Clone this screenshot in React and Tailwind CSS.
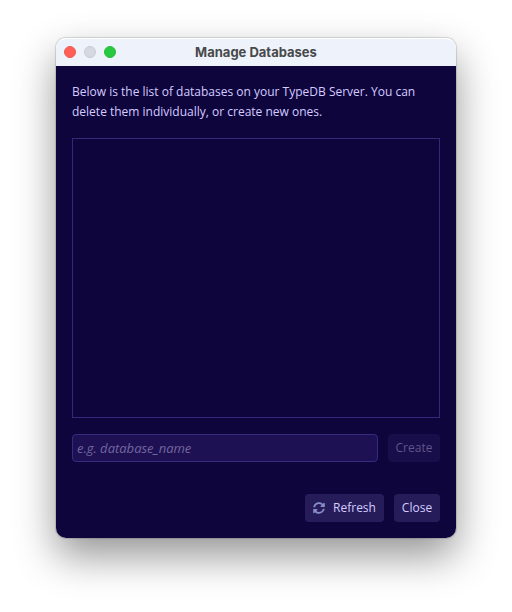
import { FaSyncAlt } from "react-icons/fa";

function WindowControl({ label, className }) {
  return (
    <button
      type="button"
      aria-label={label}
      className={`size-3 rounded-full border ${className}`}
    />
  );
}

function TitleBar({ title }) {
  return (
    <header className="grid h-7 grid-cols-[1fr_auto_1fr] items-center rounded-t-[10px] bg-[#eef2fa] px-2 shadow-[inset_0_1px_0_#ffffff]">
      <div className="flex gap-2">
        <WindowControl label="Close window" className="border-[#ee5a52] bg-[#ff5f57]" />
        <WindowControl label="Minimize window" className="border-[#c9ccd3] bg-[#d5d8df]" />
        <WindowControl label="Zoom window" className="border-[#27bd3c] bg-[#28c840]" />
      </div>
      <h1 className="font-[Inter,sans-serif] text-[13px] leading-5 font-bold text-[#48494b]">
        {title}
      </h1>
    </header>
  );
}

function ActionButton({ className, children, ...props }) {
  return (
    <button
      type="button"
      className={`flex h-7 shrink-0 items-center justify-center gap-2 rounded text-xs whitespace-nowrap ${className}`}
      {...props}
    >
      {children}
    </button>
  );
}

export default function App() {
  return (
    <main className="flex min-h-screen flex-col bg-white px-14 pt-[38px] pb-[74px] font-['Open_Sans',sans-serif]">
      <section className="flex grow flex-col rounded-[10px] shadow-[0_0_1px_1px_rgba(0,0,0,0.14),0_18px_40px_rgba(0,0,0,0.42)]">
        <TitleBar title="Manage Databases" />
        <div className="flex grow flex-col gap-4 rounded-b-[10px] bg-[#0e053d] p-4 text-[#d5ccff]">
          <p className="text-xs leading-5">
            Below is the list of databases on your TypeDB Server. You can
            <br />
            delete them individually, or create new ones.
          </p>
          <ul aria-label="Databases" className="min-h-40 grow border border-[#35287a]" />
          <form className="flex gap-2.5" onSubmit={(e) => e.preventDefault()}>
            <input
              type="text"
              aria-label="Database name"
              placeholder="e.g. database_name"
              className="h-7 min-w-0 grow rounded border border-[#372a7f] bg-[#1d1153] px-1 text-[13px] text-[#d5ccff] outline-none placeholder:text-[#73669f] placeholder:italic"
            />
            <ActionButton disabled className="w-13 bg-[#180e49] text-[#61558c]">
              Create
            </ActionButton>
          </form>
          <div className="mt-4 flex justify-end gap-2.5">
            <ActionButton className="w-[79px] bg-[#261c59] text-[#d5ccff]">
              <FaSyncAlt className="size-3 text-[#888dca]" />
              Refresh
            </ActionButton>
            <ActionButton className="w-[46px] bg-[#261c59] text-[#d5ccff]">Close</ActionButton>
          </div>
        </div>
      </section>
    </main>
  );
}
